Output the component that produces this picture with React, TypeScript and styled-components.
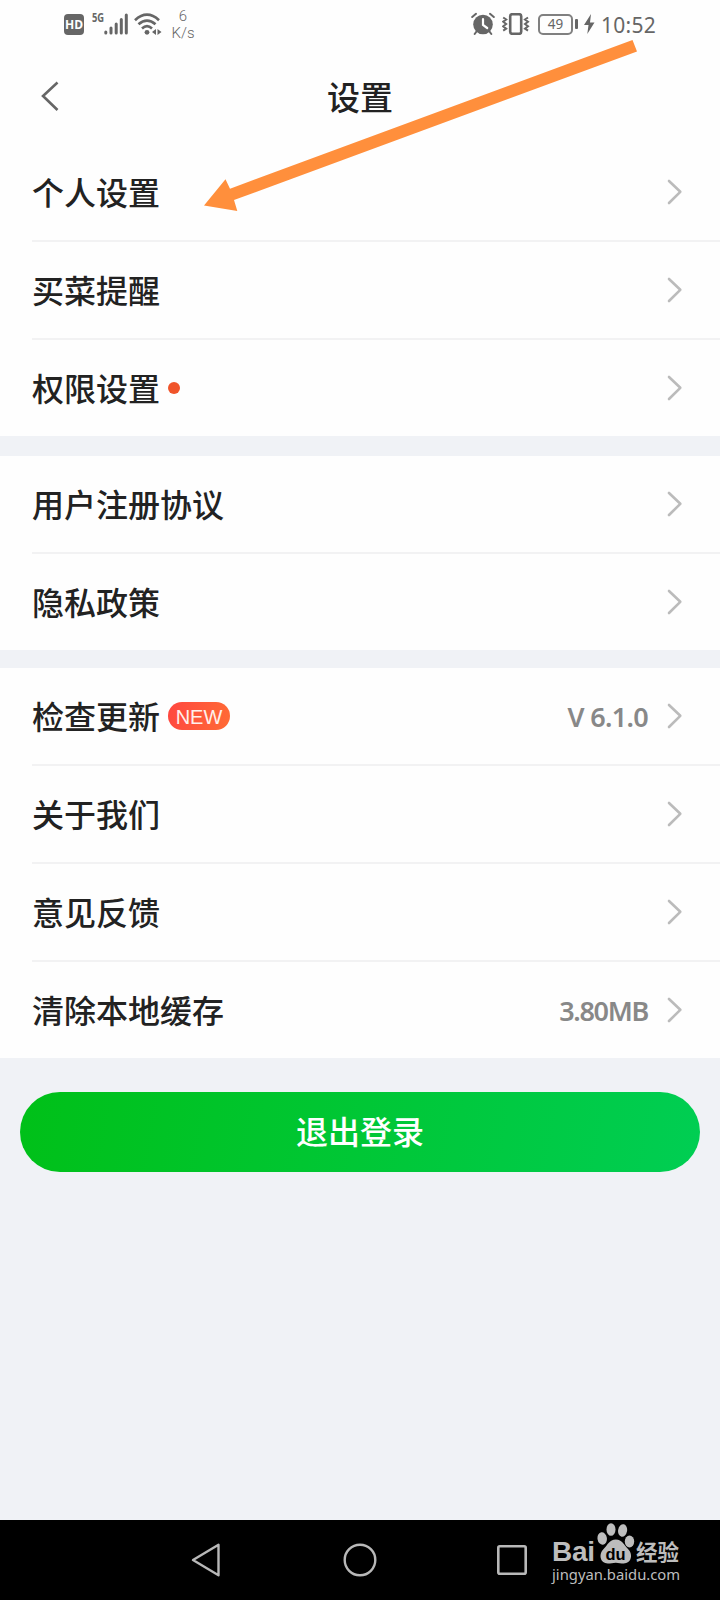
import React from 'react';
import styled, { createGlobalStyle } from 'styled-components';

const GlobalStyle = createGlobalStyle`
  *, *::before, *::after { box-sizing: border-box; }
  body { margin: 0; background: #f0f2f6; }
  button { border: 0; padding: 0; background: none; font: inherit; }
  svg { display: block; flex: none; }
`;

const cjk = `'Noto Sans CJK SC', sans-serif`;

const Screen = styled.div`
  position: relative;
  width: 720px;
  height: 1600px;
  display: flex;
  flex-direction: column;
  overflow: hidden;
  background: #f0f2f6;
  font-family: ${cjk};
  color: #222;
`;

const StatusBar = styled.header`
  display: flex;
  justify-content: space-between;
  height: 48px;
  padding: 0 63px 0 64px;
  background: #fefefe;
  color: #666;
  font-family: 'Noto Sans', sans-serif;
`;

const StatusGroup = styled.div`
  display: flex;
  align-items: center;
  height: 48px;
`;

const HdBadge = styled.span`
  width: 20px;
  height: 21px;
  margin: 1px 8px 0 0;
  border-radius: 4px;
  background: #666;
  color: #fff;
  font: 700 12px/21px 'Open Sans', sans-serif;
  text-align: center;
`;

const NetworkType = styled.span`
  width: 12px;
  margin-bottom: 12px;
  font: 700 12.5px/12px 'Open Sans', sans-serif;
  transform: scaleX(0.75);
  transform-origin: left;
`;

const NetSpeed = styled.div`
  display: flex;
  flex-direction: column;
  align-items: center;
  width: 24px;
  margin-left: 9px;
  padding-top: 2px;
  font: 300 15px/17px Roboto, sans-serif;
`;

const Battery = styled.span`
  width: 35px;
  height: 21px;
  margin: 0 2px 0 8px;
  border: 2px solid #808080;
  border-radius: 5px;
  font: 400 13.5px/17px 'Noto Sans', sans-serif;
  text-align: center;
`;

const BatteryTip = styled.span`
  width: 3px;
  height: 10px;
  margin-right: 6px;
  border-radius: 1px;
  background: #666;
`;

const Clock = styled.span`
  width: 56px;
  margin: 2px 0 0 6px;
  font: 400 21px/26px 'Noto Sans', sans-serif;
  letter-spacing: 0.3px;
  white-space: nowrap;
`;

const TitleBar = styled.div`
  display: grid;
  grid-template-columns: 84px 1fr 84px;
  align-items: center;
  height: 96px;
  background: #fefefe;
`;

const BackButton = styled.button`
  display: flex;
  padding-left: 40px;
`;

const Title = styled.h1`
  margin: 0;
  font-size: 33px;
  line-height: 48px;
  font-weight: 500;
  text-align: center;
`;

const Group = styled.section<{ $gap?: number }>`
  margin-bottom: ${(p) => p.$gap ?? 0}px;
  padding-left: 32px;
  background: #fefefe;
`;

const Row = styled.div`
  display: flex;
  align-items: center;
  height: 96px;
  padding-right: 37px;

  & + & {
    height: 98px;
    border-top: 2px solid #f2f2f3;
  }
`;

const Label = styled.span`
  margin-bottom: 3px;
  font-size: 32px;
  line-height: 48px;
  font-weight: 500;
`;

const Dot = styled.i`
  width: 12px;
  height: 12px;
  margin-left: 8px;
  border-radius: 50%;
  background: #f0542a;
`;

const NewBadge = styled.span`
  width: 62px;
  height: 28px;
  margin-left: 8px;
  border-radius: 14px;
  background: linear-gradient(100deg, #ff4740, #ff6b35);
  color: #fff0ec;
  font: 400 20px/30px 'Liberation Sans', sans-serif;
  text-align: center;
`;

const Value = styled.span<{ $spacing: number }>`
  margin: 2px 19px 0 0;
  color: #888;
  font: 600 27px/40px 'Noto Sans', sans-serif;
  letter-spacing: ${(p) => p.$spacing}px;
`;

const Spacer = styled.span`
  flex: 1;
`;

const LogoutButton = styled.button`
  height: 80px;
  margin: 34px 20px 0;
  padding-bottom: 3px;
  border-radius: 40px;
  background: linear-gradient(100deg, #00c018, #00ce53);
  color: #fff;
  font: 500 32px/77px ${cjk};
`;

const NavBar = styled.nav`
  display: grid;
  grid-template-columns: repeat(3, 152px);
  justify-content: center;
  justify-items: center;
  align-items: center;
  height: 80px;
  margin-top: auto;
  background: #000;
`;

const BackKey = styled.svg`
  margin-right: 4px;
`;

const ArrowOverlay = styled.svg`
  position: absolute;
  left: 0;
  top: 0;
  pointer-events: none;
`;

const Watermark = styled.div`
  position: absolute;
  left: 552px;
  top: 1522px;
  width: 130px;
  color: #bdbdbd;
`;

const BrandLine = styled.div`
  display: flex;
  height: 42px;
  align-items: flex-end;
`;

const BrandLatin = styled.span`
  width: 45px;
  font: 700 28px/24px 'Liberation Sans', sans-serif;
  letter-spacing: -0.3px;
`;

const BrandCjk = styled.span`
  margin-left: 1px;
  font: 700 21.5px/26px ${cjk};
`;

const SiteUrl = styled.div`
  font: 400 14.8px/20px 'Noto Sans', sans-serif;
  white-space: nowrap;
`;

const Chevron = () => (
  <svg width="16" height="26" viewBox="0 0 16 26" fill="none" stroke="#bbb" strokeWidth="2.6" strokeLinecap="round" strokeLinejoin="round">
    <path d="M2 2 13.3 12.8 2 24" />
  </svg>
);

const Signal = () => (
  <svg width="24" height="22" viewBox="0 0 24 22" fill="none" stroke="#666" strokeWidth="3" strokeLinecap="round">
    <path d="M1.8 20v-1M7 20v-5M12.2 20v-9M17.3 20V6.5M22.3 20V2" />
  </svg>
);

const WifiIcon = styled.svg`
  margin-left: 6px;
`;

const Wifi = () => (
  <WifiIcon width="28" height="23" viewBox="0 0 28 23" fill="none" stroke="#666" strokeWidth="2.7">
    <path d="M1 7.2Q13 -3.8 25 7.2M4.5 11.3Q13 3.8 21.5 11.3M8 15.4Q13 11 18 15.4" />
    <circle cx="13" cy="19.3" r="2.4" fill="#666" stroke="none" />
    <path d="M22 16v6l-4-3zM23.5 16v6l4-3z" fill="#666" stroke="none" />
  </WifiIcon>
);

const Alarm = () => (
  <svg width="24" height="24" viewBox="0 0 24 24" fill="none" stroke="#666" strokeWidth="2" strokeLinecap="round">
    <circle cx="12" cy="12.5" r="9.8" fill="#666" stroke="none" />
    <path d="M1.2 5 5 1.8M22.8 5 19 1.8M5.5 19.5 3.7 22M18.5 19.5l1.8 2.5" />
    <path d="M12 7v6l4.2 3" stroke="#fff" strokeWidth="2.2" />
  </svg>
);

const VibrateIcon = styled.svg`
  margin-left: 7px;
`;

const Vibrate = () => (
  <VibrateIcon width="28" height="22" viewBox="0 0 28 22" fill="none" stroke="#666">
    <rect x="8.2" y="1.2" width="11" height="19.6" rx="2" strokeWidth="2.6" />
    <path d="m1.2 4.5 3 2-3 2.2 3 2.3-3 2.3 3 2.3-3 2M26 4.5l-3 2 3 2.2-3 2.3 3 2.3-3 2.3 3 2" strokeWidth="2" />
  </VibrateIcon>
);

const Bolt = () => (
  <svg width="11" height="20" viewBox="0 0 11 20" fill="#666">
    <path d="M7 0 0 11h4.5L3.3 20 10.5 8.5H6z" />
  </svg>
);

const Paw = () => (
  <svg width="38" height="41" viewBox="0 0 38 41" fill="#bdbdbd">
    <ellipse cx="5.2" cy="15.5" rx="4.7" ry="6.2" transform="rotate(-8 5.2 15.5)" />
    <ellipse cx="14" cy="6.5" rx="4.5" ry="6.3" />
    <ellipse cx="25.6" cy="7.5" rx="4.5" ry="6.3" transform="rotate(10 25.6 7.5)" />
    <ellipse cx="32.5" cy="18.5" rx="4.7" ry="6" />
    <path d="M18.8 16.5c6.5 0 8.2 5.5 12 9.3 6 6 3.2 14.7-4 14.7-3 0-5-.8-8-.8s-5 .8-8 .8c-7.2 0-10-8.7-4-14.7 4-4 5.5-9.3 12-9.3z" />
    <text x="18.5" y="36.5" textAnchor="middle" fill="#000" fontFamily="Liberation Sans, sans-serif" fontSize="16.5" fontWeight="700">du</text>
  </svg>
);

type Item = { label: string; value?: string; spacing?: number; dot?: boolean; isNew?: boolean };

const groups: { gap: number; items: Item[] }[] = [
  { gap: 20, items: [{ label: '个人设置' }, { label: '买菜提醒' }, { label: '权限设置', dot: true }] },
  { gap: 18, items: [{ label: '用户注册协议' }, { label: '隐私政策' }] },
  {
    gap: 0,
    items: [
      { label: '检查更新', isNew: true, value: 'V 6.1.0', spacing: -0.7 },
      { label: '关于我们' },
      { label: '意见反馈' },
      { label: '清除本地缓存', value: '3.80MB', spacing: -1.3 },
    ],
  },
];

export default function App() {
  return (
    <Screen>
      <GlobalStyle />
      <StatusBar>
        <StatusGroup>
          <HdBadge>HD</HdBadge>
          <NetworkType>5G</NetworkType>
          <Signal />
          <Wifi />
          <NetSpeed>
            <span>6</span>
            <span>K/s</span>
          </NetSpeed>
        </StatusGroup>
        <StatusGroup>
          <Alarm />
          <Vibrate />
          <Battery>49</Battery>
          <BatteryTip />
          <Bolt />
          <Clock>10:52</Clock>
        </StatusGroup>
      </StatusBar>

      <TitleBar>
        <BackButton aria-label="返回">
          <svg width="20" height="30" viewBox="0 0 20 30" fill="none" stroke="#666" strokeWidth="2.6">
            <path d="M17.5 1.5 3 15l14.5 14" />
          </svg>
        </BackButton>
        <Title>设置</Title>
      </TitleBar>

      {groups.map((group, i) => (
        <Group key={i} $gap={group.gap}>
          {group.items.map((item) => (
            <Row key={item.label}>
              <Label>{item.label}</Label>
              {item.dot && <Dot />}
              {item.isNew && <NewBadge>NEW</NewBadge>}
              <Spacer />
              {item.value && <Value $spacing={item.spacing ?? 0}>{item.value}</Value>}
              <Chevron />
            </Row>
          ))}
        </Group>
      ))}

      <LogoutButton>退出登录</LogoutButton>

      <NavBar>
        <BackKey width="34" height="36" viewBox="0 0 34 36" fill="none" stroke="#b8b8b8" strokeWidth="2.4" strokeLinejoin="round">
          <path d="M4 18 29.5 2.8v30.4z" />
        </BackKey>
        <svg width="34" height="34" viewBox="0 0 34 34" fill="none" stroke="#b8b8b8" strokeWidth="2.4">
          <circle cx="17" cy="17" r="15.3" />
        </svg>
        <svg width="30" height="30" viewBox="0 0 30 30" fill="none" stroke="#b8b8b8" strokeWidth="2.6">
          <rect x="1.3" y="1.3" width="27.4" height="27.4" rx="1.5" />
        </svg>
      </NavBar>

      <Watermark>
        <BrandLine>
          <BrandLatin>Bai</BrandLatin>
          <Paw />
          <BrandCjk>经验</BrandCjk>
        </BrandLine>
        <SiteUrl>jingyan.baidu.com</SiteUrl>
      </Watermark>

      <ArrowOverlay width="720" height="230" viewBox="0 0 720 230">
        <path d="M204 205.5 225.5 179.3 230 188.7 632.5 40 637 51.5 234 200 237.3 211z" fill="#ff8f3c" />
      </ArrowOverlay>
    </Screen>
  );
}
